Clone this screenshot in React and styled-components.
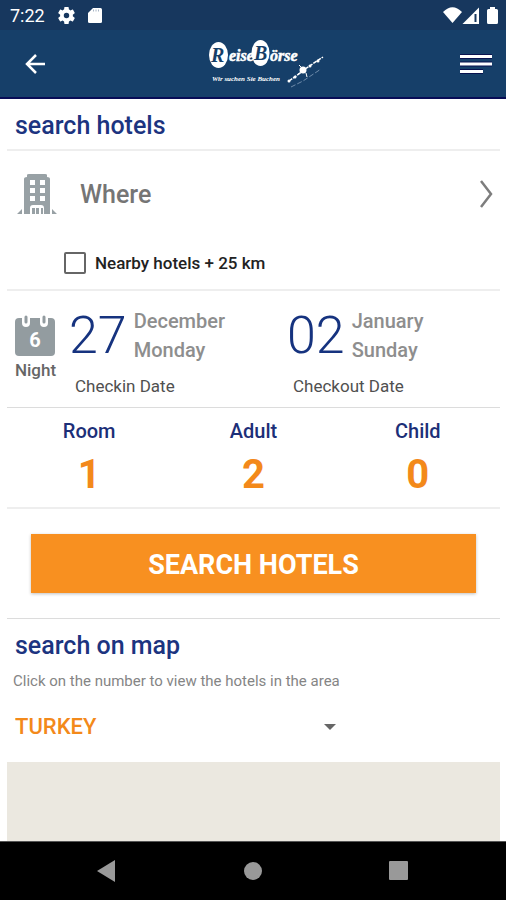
import React from 'react'
import styled, { createGlobalStyle } from 'styled-components'

const GlobalStyle = createGlobalStyle`
  * {
    box-sizing: border-box;
  }
  body {
    margin: 0;
    background: #fff;
    font-family: Roboto, 'Liberation Sans', sans-serif;
  }
  button, select, input {
    font-family: inherit;
    margin: 0;
  }
`
const Screen = styled.div`
  display: flex;
  flex-direction: column;
  min-height: 100vh;
`
const StatusBar = styled.div`
  display: flex;
  align-items: center;
  justify-content: space-between;
  height: 30px;
  padding: 1px 7px 0 10px;
  background: #17375e;
  color: #fff;
`
const StatusGroup = styled.div`
  display: flex;
  align-items: center;
  gap: 13px;
`
const Time = styled.span`
  font-size: 18px;
  line-height: 24px;
`
const Header = styled.header`
  display: grid;
  grid-template-columns: 48px 1fr 34px;
  align-items: center;
  justify-items: center;
  height: 69px;
  padding: 0 13px 0 24px;
  background: #163f69;
  border-bottom: 2px solid #080c56;
`
const IconButton = styled.button`
  display: flex;
  justify-self: start;
  padding: 0;
  border: none;
  background: none;
  color: #fff;
`
const Content = styled.main`
  display: flex;
  flex: 1;
  flex-direction: column;
  padding: 0 6px 0 7px;
`
const Section = styled.section`
  border-bottom: ${({ $line }) => $line || '2px'} solid ${({ $line }) => $line ? '#dcdcdc' : '#eee'};
`
const Title = styled.h2`
  margin: 0;
  padding: 12px 8px 8px;
  color: #1c3480;
  font-size: 25px;
  font-weight: 500;
  line-height: 30px;
`
const WhereButton = styled.button`
  display: flex;
  align-items: center;
  width: 100%;
  height: 86px;
  padding: 0 7px 0 9px;
  border: none;
  background: none;
  color: #757575;
  font-size: 25px;
  font-weight: 500;
  text-align: left;
`
const WhereText = styled.span`
  flex: 1;
  padding-left: 22px;
`
const Nearby = styled.label`
  display: flex;
  align-items: center;
  gap: 9px;
  height: 52px;
  padding-left: 57px;
  color: #222;
  font-size: 17px;
  font-weight: 500;
`
const Checkbox = styled.input`
  appearance: none;
  width: 22px;
  height: 22px;
  border: 2px solid #666;
  border-radius: 2px;
  background: #fff;

  &:checked {
    background: #f7901e;
  }
`
const Dates = styled.div`
  display: grid;
  grid-template-columns: 57px 1fr 1fr;
  height: 116px;
`
const Night = styled.div`
  display: flex;
  flex-direction: column;
  align-items: center;
  padding-top: 24px;
  color: #666;
  font-size: 17px;
  font-weight: 500;
  line-height: 26px;
`
const DateButton = styled.button`
  display: flex;
  flex-direction: column;
  align-items: flex-start;
  padding: 16px 0 0 5px;
  border: none;
  background: none;
  text-align: left;
`
const DateRow = styled.span`
  display: flex;
  align-items: center;
  gap: 7px;
`
const Day = styled.span`
  color: #16337f;
  font-size: 52px;
  font-weight: 300;
  line-height: 58px;
`
const Month = styled.span`
  display: flex;
  flex-direction: column;
  color: #8e8e8e;
  font-size: 20px;
  font-weight: 500;
  line-height: 29px;
`
const DateLabel = styled.span`
  padding: 9px 0 0 6px;
  color: #505050;
  font-size: 17px;
  line-height: 24px;
`
const Counters = styled.div`
  display: grid;
  grid-template-columns: repeat(3, 1fr);
  height: 99px;
`
const Counter = styled.button`
  display: flex;
  flex-direction: column;
  align-items: center;
  padding: 10px 0 0;
  border: none;
  background: none;
  color: #1c2f78;
  font-size: 20px;
  font-weight: 500;
  line-height: 26px;
`
const Count = styled.span`
  padding-top: 7px;
  color: #f3891a;
  font-size: 40px;
  font-weight: 700;
  line-height: 48px;
`
const SearchBox = styled.div`
  padding: 25px 24px;
`
const SearchButton = styled.button`
  display: block;
  width: 100%;
  height: 59px;
  padding: 2px 0 0;
  border: none;
  background: #f89020;
  box-shadow: 0 1px 3px rgba(0, 0, 0, 0.25);
  color: #fff;
  font-size: 27px;
  font-weight: 700;
`
const Hint = styled.p`
  margin: 0;
  padding: 2px 6px 0;
  color: #858585;
  font-size: 15px;
  line-height: 20px;
`
const Country = styled.div`
  display: grid;
  align-items: center;
  width: 67%;
  height: 71px;
`
const CountrySelect = styled.select`
  grid-area: 1 / 1;
  width: 100%;
  height: 48px;
  padding: 0 8px;
  appearance: none;
  border: none;
  background: none;
  color: #f3891a;
  font-size: 22px;
  font-weight: 500;
`
const Arrow = styled.svg`
  grid-area: 1 / 1;
  justify-self: end;
  pointer-events: none;
`
const MapArea = styled.div`
  flex: 1;
  min-height: 78px;
  background: #ebe8e0;
`
const SystemNav = styled.nav`
  display: flex;
  align-items: center;
  justify-content: space-between;
  height: 59px;
  padding: 0 97px 0 96px;
  border-top: 1px solid #555;
  background: #000;
`

const GearIcon = () => (
  <svg width="17" height="17" viewBox="2 2 20 20" fill="#fff" aria-hidden="true">
    <path d="M19.43 12.98c.04-.32.07-.64.07-.98s-.03-.66-.07-.98l2.11-1.65c.19-.15.24-.42.12-.64l-2-3.46c-.12-.22-.39-.3-.61-.22l-2.49 1c-.52-.4-1.08-.73-1.69-.98l-.38-2.65A.49.49 0 0 0 14 2h-4c-.25 0-.46.18-.49.42l-.38 2.65c-.61.25-1.17.59-1.69.98l-2.49-1c-.23-.09-.49 0-.61.22l-2 3.46c-.13.22-.07.49.12.64l2.11 1.65c-.04.32-.07.65-.07.98s.03.66.07.98l-2.11 1.65c-.19.15-.24.42-.12.64l2 3.46c.12.22.39.3.61.22l2.49-1c.52.4 1.08.73 1.69.98l.38 2.65c.03.24.24.42.49.42h4c.25 0 .46-.18.49-.42l.38-2.65c.61-.25 1.17-.59 1.69-.98l2.49 1c.23.09.49 0 .61-.22l2-3.46c.12-.22.07-.49-.12-.64l-2.11-1.65zM12 15.200a3.200 3.200 0 1 1 0-6.400 3.200 3.200 0 0 1 0 6.400z" />
  </svg>
)

const CardIcon = () => (
  <svg width="14" height="17" viewBox="0 0 14 17" aria-hidden="true">
    <path d="M5 1h7.500q1.500 0 1.500 1.500v12q0 1.500-1.500 1.500h-11Q0 16 0 14.500V6z" fill="#fff" />
    <path d="M5.500 2.500v2M8 2.500v2M10.500 2.500v2" stroke="#a9b6c6" strokeWidth="1" />
  </svg>
)

const SignalIcons = () => (
  <svg width="56" height="19" viewBox="0 0 56 19" fill="#fff" aria-hidden="true">
    <path d="M0 6Q9.500-3.500 19 6L9.500 17z" />
    <path d="M36 1.500V18H19.500z" />
    <path d="M32.500 8v8" stroke="#17375e" strokeWidth="2" />
    <path d="M47 1h5v2h1.500q1.500 0 1.500 1.500v12q0 1.500-1.500 1.500h-8Q44 18 44 16.500v-12Q44 3 45.500 3H47z" />
  </svg>
)

const BackIcon = () => (
  <svg width="22" height="22" viewBox="0 0 22 22" fill="none" stroke="#fff" strokeWidth="2.500" aria-hidden="true">
    <path d="M21 11H3M12 2l-9 9 9 9" />
  </svg>
)

const MenuIcon = () => (
  <svg width="34" height="22" viewBox="0 0 34 22" aria-hidden="true">
    <path d="M1 3.500h32M1 11h32M1 18.500h23" stroke="#08124f" strokeWidth="5" />
    <path d="M1 3.500h32M1 11h32M1 18.500h23" stroke="#fff" strokeWidth="3" />
  </svg>
)

const Logo = () => (
  <svg width="118" height="54" viewBox="0 0 118 54" fill="#fff" role="img" aria-label="ReiseBörse">
    <ellipse cx="11.500" cy="18" rx="9.500" ry="13" />
    <ellipse cx="53.500" cy="16" rx="9" ry="13" />
    <g fontFamily="'Liberation Serif', serif" fontStyle="italic" fontWeight="700">
      <text x="4" y="25" fontSize="20" fill="#163f69">R</text>
      <text x="47" y="23" fontSize="20" fill="#163f69">B</text>
    </g>
    <g fontFamily="'Liberation Serif', serif" fontStyle="italic" fontWeight="700" stroke="#fff" strokeWidth="0.500">
      <text x="22" y="24" fontSize="16">eise</text>
      <text x="63" y="24" fontSize="16">örse</text>
    </g>
    <text x="5" y="44" fontSize="7" fontFamily="'Liberation Serif', serif" fontStyle="italic" fontWeight="700">
      Wir suchen Sie Buchen
    </text>
    <path d="M82 44l14-10M98 32l18-12" stroke="#fff" strokeWidth="1.500" strokeDasharray="4 1" />
    <path d="M84 50l12-6 18-12" fill="none" stroke="#6f8cab" strokeWidth="1" strokeDasharray="5 2" />
    <circle cx="96" cy="33" r="3.500" />
    <path d="M92 28l3 3M91 37l4-2M99 36l1 4" stroke="#fff" strokeWidth="1" />
    <circle cx="103" cy="29" r="1.500" />
    <circle cx="111" cy="24" r="1.500" />
    <circle cx="88" cy="40" r="1.500" />
    <circle cx="82" cy="44" r="1.500" />
  </svg>
)

const HotelIcon = () => (
  <svg width="42" height="42" viewBox="0 0 42 42" fill="#98a1a5" aria-hidden="true">
    <path
      fillRule="evenodd"
      d="M11 2q0-1 2-1h16q2 0 2 1v2q3 0 3 2v35h-6v-6q0-3-3-3h-8q-3 0-3 3v6H8V6q0-2 3-2zM14 7v5h5V7zM24 7v5h5V7zM14 15v5h5v-5zM24 15v5h5v-5zM14 23v5h5v-5zM24 23v5h5v-5z"
    />
    <path d="M16 35h3v6h-3zM20 35h3v6h-3zM25 35h2v6h-2zM1 41l5-5v5zM36 36l5 5h-5z" />
  </svg>
)

const CalendarIcon = () => (
  <svg width="44" height="42" viewBox="0 0 44 42" aria-hidden="true">
    <rect x="1" y="3" width="40" height="38" rx="4" fill="#939ca0" />
    <path d="M12 1v7M30 1v7" stroke="#fff" strokeWidth="8" strokeLinecap="round" />
    <path d="M12 2v5M30 2v5" stroke="#939ca0" strokeWidth="3" strokeLinecap="round" />
    <text x="21" y="32" fill="#fff" fontFamily="Roboto, sans-serif" fontSize="20" fontWeight="700" textAnchor="middle">6</text>
  </svg>
)

const ChevronIcon = () => (
  <svg width="14" height="30" viewBox="0 0 14 30" fill="none" stroke="#7d7d7d" strokeWidth="2.500" aria-hidden="true">
    <path d="M2 2l10 13L2 28" />
  </svg>
)

const dates = [
  { day: '27', month: 'December', weekday: 'Monday', label: 'Checkin Date' },
  { day: '02', month: 'January', weekday: 'Sunday', label: 'Checkout Date' },
]

const counters = [
  { label: 'Room', value: 1 },
  { label: 'Adult', value: 2 },
  { label: 'Child', value: 0 },
]

const App = () => {

  const [nearby, setNearby] = React.useState(false);

  return (
    <Screen>
      <GlobalStyle />
      <StatusBar>
        <StatusGroup>
          <Time>7:22</Time>
          <GearIcon />
          <CardIcon />
        </StatusGroup>
        <SignalIcons />
      </StatusBar>
      <Header>
        <IconButton aria-label="Back"><BackIcon /></IconButton>
        <Logo />
        <IconButton aria-label="Menu"><MenuIcon /></IconButton>
      </Header>
      <Content>
        <Section>
          <Title>search hotels</Title>
        </Section>
        <Section>
          <WhereButton>
            <HotelIcon />
            <WhereText>Where</WhereText>
            <ChevronIcon />
          </WhereButton>
          <Nearby>
            <Checkbox type="checkbox" checked={nearby} onChange={() => setNearby(!nearby)} />
            Nearby hotels + 25 km
          </Nearby>
        </Section>
        <Section $line="1px">
          <Dates>
            <Night>
              <CalendarIcon />
              Night
            </Night>
            {dates.map(({ day, month, weekday, label }) => (
              <DateButton key={label}>
                <DateRow>
                  <Day>{day}</Day>
                  <Month>
                    <span>{month}</span>
                    <span>{weekday}</span>
                  </Month>
                </DateRow>
                <DateLabel>{label}</DateLabel>
              </DateButton>
            ))}
          </Dates>
        </Section>
        <Section>
          <Counters>
            {counters.map(({ label, value }) => (
              <Counter key={label}>
                {label}
                <Count>{value}</Count>
              </Counter>
            ))}
          </Counters>
        </Section>
        <Section $line="1px">
          <SearchBox>
            <SearchButton>SEARCH HOTELS</SearchButton>
          </SearchBox>
        </Section>
        <Title>search on map</Title>
        <Hint>Click on the number to view the hotels in the area</Hint>
        <Country>
          <CountrySelect aria-label="Country" defaultValue="TURKEY">
            <option>TURKEY</option>
          </CountrySelect>
          <Arrow width="14" height="8" viewBox="0 0 14 8" aria-hidden="true">
            <path d="M1 1h12L7 7z" fill="#666" />
          </Arrow>
        </Country>
        <MapArea />
      </Content>
      <SystemNav>
        <IconButton aria-label="System back">
          <svg width="20" height="22" viewBox="0 0 20 22"><path d="M19 0v22L1 11z" fill="#999" /></svg>
        </IconButton>
        <IconButton aria-label="Home">
          <svg width="20" height="20" viewBox="0 0 20 20"><circle cx="10" cy="10" r="9" fill="#999" /></svg>
        </IconButton>
        <IconButton aria-label="Recent apps">
          <svg width="20" height="20" viewBox="0 0 20 20"><rect width="19" height="19" rx="1" fill="#999" /></svg>
        </IconButton>
      </SystemNav>
    </Screen>
  )
}

export default App
